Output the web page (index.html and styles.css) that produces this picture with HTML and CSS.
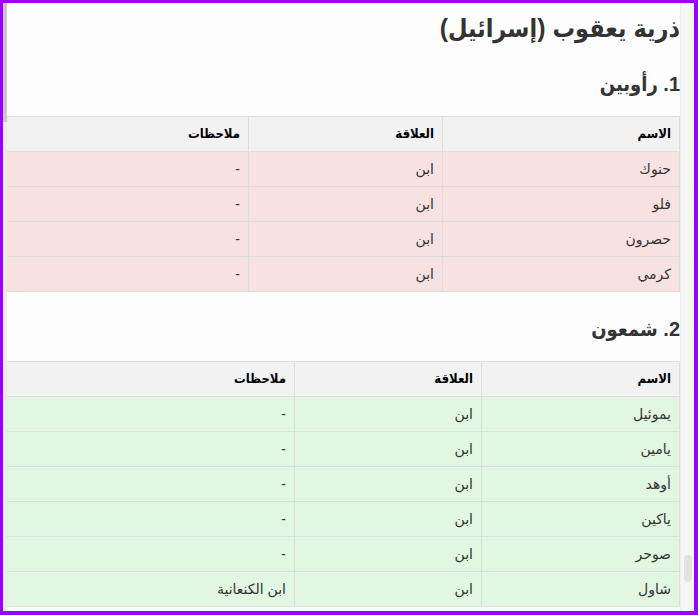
FILE: index.html
```html
<!DOCTYPE html>
<html lang="ar">
<head>
<meta charset="utf-8">
<title>ذرية يعقوب (إسرائيل)</title>
<link rel="stylesheet" href="styles.css">
</head>
<body>
<div class="frame">
  <div class="rail"><div class="rail-thumb"></div></div>
  <main class="content" dir="rtl">
    <h1 class="title">ذرية يعقوب (إسرائيل)</h1>

    <h2 class="section">1. رأوبين</h2>
    <table class="family family-red">
      <colgroup><col class="c1-name"><col class="c1-rel"><col class="c1-notes"></colgroup>
      <thead>
        <tr><th>الاسم</th><th>العلاقة</th><th>ملاحظات</th></tr>
      </thead>
      <tbody>
        <tr><td>حنوك</td><td>ابن</td><td>-</td></tr>
        <tr><td>فلو</td><td>ابن</td><td>-</td></tr>
        <tr><td>حصرون</td><td>ابن</td><td>-</td></tr>
        <tr><td>كرمي</td><td>ابن</td><td>-</td></tr>
      </tbody>
    </table>

    <h2 class="section">2. شمعون</h2>
    <table class="family family-green">
      <colgroup><col class="c2-name"><col class="c2-rel"><col class="c2-notes"></colgroup>
      <thead>
        <tr><th>الاسم</th><th>العلاقة</th><th>ملاحظات</th></tr>
      </thead>
      <tbody>
        <tr><td>يموئيل</td><td>ابن</td><td>-</td></tr>
        <tr><td>يامين</td><td>ابن</td><td>-</td></tr>
        <tr><td>أوهد</td><td>ابن</td><td>-</td></tr>
        <tr><td>ياكين</td><td>ابن</td><td>-</td></tr>
        <tr><td>صوحر</td><td>ابن</td><td>-</td></tr>
        <tr><td>شاول</td><td>ابن</td><td>ابن الكنعانية</td></tr>
      </tbody>
    </table>
  </main>
  <div class="scrollbar"><div class="scroll-thumb"></div></div>
</div>
</body>
</html>
```
FILE: styles.css
```css
html, body {
  margin: 0;
  padding: 0;
}

body {
  font-family: "Liberation Sans", "DejaVu Sans", Arial, sans-serif;
  background: #ffffff;
}

.frame {
  box-sizing: border-box;
  width: 698px;
  height: 615px;
  border-style: solid;
  border-color: #9900ff;
  border-width: 3px 4px 4px 3px;
  display: flex;
  overflow: hidden;
}

.rail {
  width: 4px;
  flex: none;
  background: #ececec;
}

.rail-thumb {
  height: 119px;
  background: #c9c9c9;
}

.content {
  flex: 1;
  min-width: 0;
  background: #fdfdfd;
  overflow: hidden;
  color: #333;
}

.scrollbar {
  width: 14px;
  flex: none;
  background: #f6f6f6;
  border-left: 1px solid #eeeeee;
  box-sizing: border-box;
  display: flex;
  flex-direction: column;
  align-items: center;
}

.scroll-thumb {
  margin-top: 552px;
  width: 8px;
  height: 27px;
  border-radius: 4px;
  background: #e2e2e2;
}

.title {
  margin: 6px 0 0 0;
  font-family: "Liberation Sans", "DejaVu Sans Condensed", "DejaVu Sans", sans-serif;
  font-size: 25px;
  line-height: 38px;
  font-weight: bold;
  color: #333;
}

.section {
  margin: 25px 0 20px 0;
  font-family: "Liberation Sans", "DejaVu Sans Condensed", "DejaVu Sans", sans-serif;
  font-size: 20px;
  line-height: 24px;
  font-weight: bold;
  color: #333;
}

.family {
  width: 100%;
  border-collapse: collapse;
  table-layout: fixed;
  font-size: 14px;
  margin-bottom: 19px;
}

.family th,
.family td {
  border: 1px solid #dddddd;
  padding: 8px;
  line-height: 18px;
  height: 18px;
  text-align: right;
}

.family th {
  background: #f2f2f2;
  color: #000;
  font-family: "Liberation Sans", "DejaVu Sans Condensed", "DejaVu Sans", sans-serif;
  font-size: 13px;
  font-weight: bold;
}

.family td {
  color: #333;
}

.family-red td {
  background: #f7e1e1;
}

.family-green td {
  background: #e1f7e1;
}

.c1-name { width: 237px; }
.c1-rel { width: 194px; }
.c1-notes { width: 242px; }

.c2-name { width: 198px; }
.c2-rel { width: 187px; }
.c2-notes { width: 288px; }
```
